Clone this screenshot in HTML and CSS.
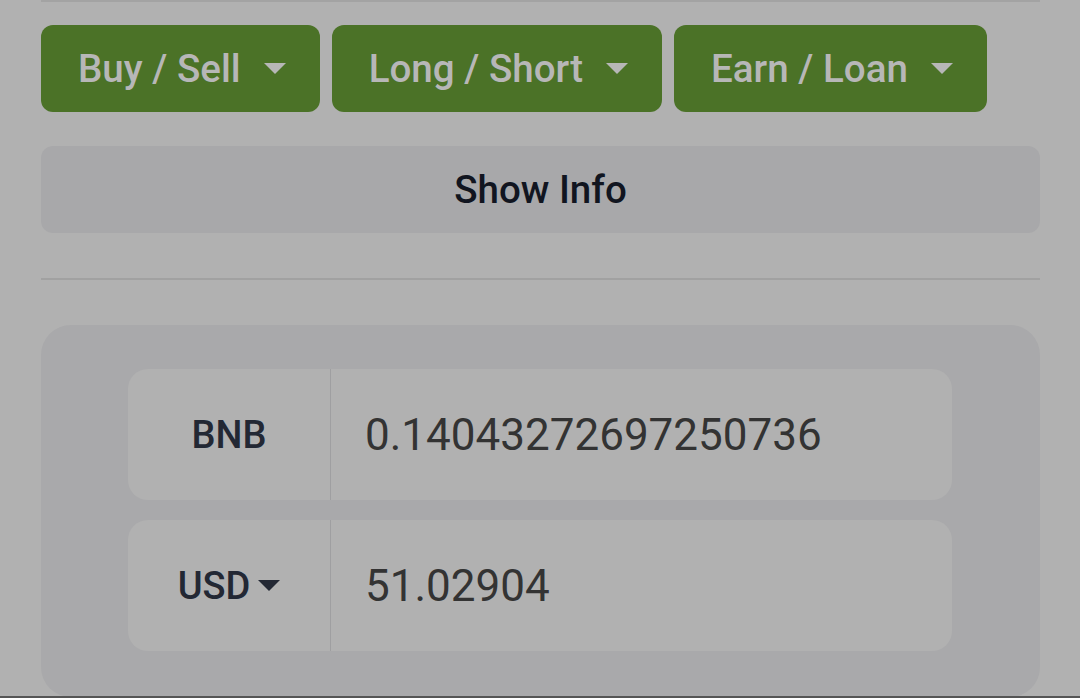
FILE: index.html
```html
<!DOCTYPE html>
<html>
<head>
  <meta charset="utf-8">
  <title>Convert</title>
  <link rel="stylesheet" href="styles.css">
</head>
<body>
  <div class="page">
    <div class="rule top-rule"></div>

    <div class="actions">
      <button class="action-btn">Buy / Sell <span class="caret"></span></button>
      <button class="action-btn">Long / Short <span class="caret"></span></button>
      <button class="action-btn">Earn / Loan <span class="caret"></span></button>
    </div>

    <button class="info-btn">Show Info</button>

    <div class="rule divider"></div>

    <div class="converter">
      <div class="conv-row">
        <div class="conv-label">BNB</div>
        <div class="conv-value">0.14043272697250736</div>
      </div>
      <div class="conv-row">
        <div class="conv-label">USD <span class="caret dark"></span></div>
        <div class="conv-value">51.02904</div>
      </div>
    </div>
  </div>
  <div class="bottom-edge"></div>
</body>
</html>
```

FILE: styles.css
```css
body {
  margin: 0;
  padding: 0;
  background: #b1b1b1;
  font-family: Roboto, 'Noto Sans', sans-serif;
  height: 698px;
  overflow: hidden;
}

.page {
  width: 999px;
  margin-left: 41px;
}

.rule {
  height: 2px;
  background: #a3a3a3;
}

.actions {
  display: flex;
  gap: 12px;
  margin-top: 23px;
}

.action-btn {
  height: 87px;
  padding: 0 34px 0 37px;
  background: #4b7227;
  color: #b7b7b7;
  border: none;
  border-radius: 12px;
  font-family: inherit;
  font-size: 38.6px;
  font-weight: 500;
  display: flex;
  align-items: center;
  gap: 23px;
}

.caret {
  display: inline-block;
  width: 0;
  height: 0;
  border-left: 11px solid transparent;
  border-right: 11px solid transparent;
  border-top: 11px solid #b7b7b7;
}

.caret.dark {
  border-top-color: #232834;
  margin-left: 8px;
}

.info-btn {
  display: block;
  width: 100%;
  height: 87px;
  margin-top: 34px;
  background: #a8a8aa;
  color: #111520;
  border: none;
  border-radius: 12px;
  font-family: inherit;
  font-size: 38.5px;
  font-weight: 500;
}

.divider {
  margin-top: 45px;
  background: #a1a1a1;
}

.converter {
  margin-top: 45px;
  background: #a9a9ab;
  border-radius: 30px;
  padding: 44px 88px 46px 87px;
  display: flex;
  flex-direction: column;
  gap: 20px;
}

.conv-row {
  display: flex;
  height: 131px;
  background: #b1b1b1;
  border-radius: 20px;
}

.conv-label {
  width: 202px;
  border-right: 1px solid #9f9fa1;
  display: flex;
  align-items: center;
  justify-content: center;
  font-size: 38px;
  font-weight: 500;
  color: #232834;
}

.conv-value {
  flex: 1;
  display: flex;
  align-items: center;
  padding-left: 34px;
  font-size: 44px;
  color: #333333;
}

.bottom-edge {
  position: fixed;
  left: 0;
  right: 0;
  bottom: 0;
  height: 2px;
  background: #555555;
}
```
